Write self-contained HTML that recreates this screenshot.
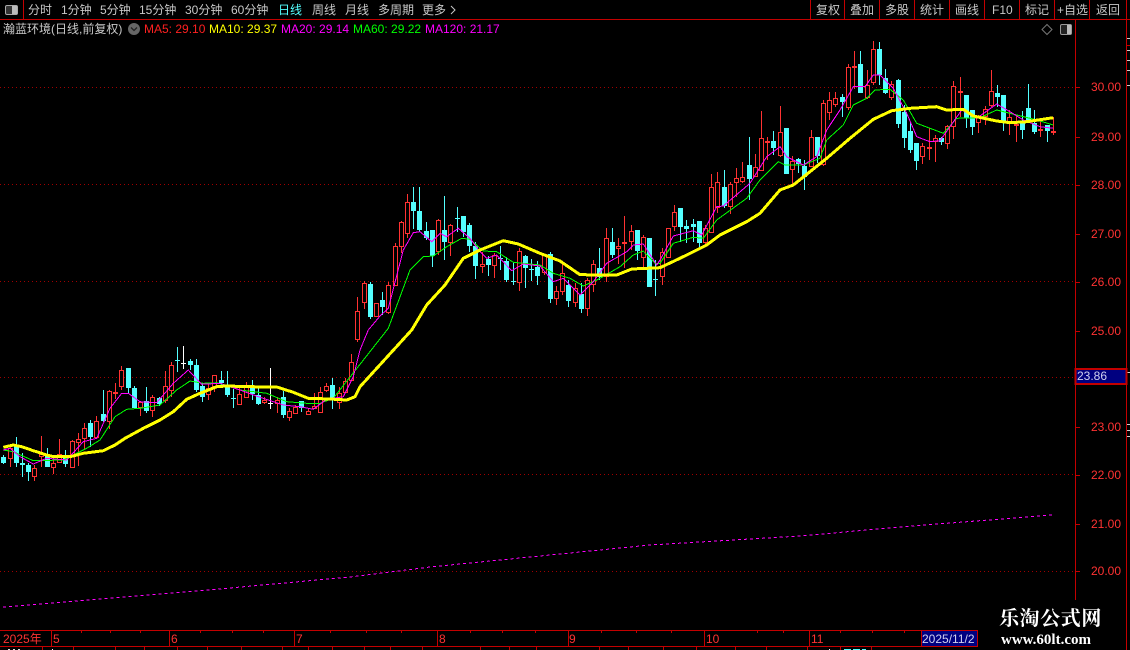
<!DOCTYPE html>
<html><head><meta charset="utf-8"><style>
html,body{margin:0;padding:0;background:#000;width:1130px;height:650px;overflow:hidden}
#p{position:relative;width:1130px;height:650px;background:#000;overflow:hidden;font:12px/14px "Liberation Sans","WenQuanYi Zen Hei","Noto Sans CJK SC",sans-serif;color:#c8c8c8}
#p span,#p div.t{position:absolute;white-space:nowrap}
.m span{top:3px}
.y span{left:1091px;color:#ff3232}
.b span{top:632px;color:#ff3232}
.c{width:5px;}
svg{position:absolute;left:0;top:0}
</style></head><body><div id="p">
<svg id="s" width="1130" height="650" viewBox="0 0 1130 650" shape-rendering="crispEdges"></svg>
<div class="m">
<span style="left:28px">分时</span><span style="left:61px">1分钟</span><span style="left:100px">5分钟</span><span style="left:139px">15分钟</span><span style="left:185px">30分钟</span><span style="left:231px">60分钟</span><span style="left:278px;color:#54ffff">日线</span><span style="left:312px">周线</span><span style="left:345px">月线</span><span style="left:378px">多周期</span><span style="left:422px">更多</span>
<span style="left:816px">复权</span><span style="left:850px">叠加</span><span style="left:885px">多股</span><span style="left:920px">统计</span><span style="left:955px">画线</span><span style="left:992px">F10</span><span style="left:1025px">标记</span><span style="left:1057px">+自选</span><span style="left:1096px">返回</span>
</div>
<span style="left:3px;top:22px">瀚蓝环境(日线,前复权)</span>
<span style="left:144px;top:22px;color:#ff2020">MA5: 29.10</span>
<span style="left:209px;top:22px;color:#ffff00">MA10: 29.37</span>
<span style="left:281px;top:22px;color:#ff00ff">MA20: 29.14</span>
<span style="left:353px;top:22px;color:#00ff00">MA60: 29.22</span>
<span style="left:425px;top:22px;color:#ff00ff">MA120: 21.17</span>
<div class="y">
<span style="top:80px">30.00</span><span style="top:130px">29.00</span><span style="top:178px">28.00</span><span style="top:227px">27.00</span><span style="top:275px">26.00</span><span style="top:324px">25.00</span><span style="top:420px">23.00</span><span style="top:468px">22.00</span><span style="top:517px">21.00</span><span style="top:564px">20.00</span>
</div>
<span style="left:1077px;top:369px;color:#d0d0f0">23.86</span>
<div class="b">
<span style="left:3px">2025年</span><span style="left:53px">5</span><span style="left:171px">6</span><span style="left:296px">7</span><span style="left:439px">8</span><span style="left:569px">9</span><span style="left:706px">10</span><span style="left:811px">11</span><span style="left:922px;color:#d0d0f0">2025/11/2</span>
</div>
<span style="left:999px;top:607px;font:bold 20px/24px 'Liberation Serif','Noto Serif CJK SC',serif;letter-spacing:.6px;color:#fff">乐淘公式网</span>
<span style="left:1001px;top:632px;font:bold 15px/16px 'Liberation Serif',serif;color:#fff">www.60lt.com</span>
</div>
<script>
var R=[
['c',350,370,345,372],['r',323,357,320,380],['c',318,368,292,380],['c',369,374,340,410],['c',375,395,370,422],['r',385,410,375,422],['r',343,350,288,380],['c',348,380,323,380],['r',368,383,350,403],['r',343,368,297,370],['c',350,373,330,380],['r',304,383,300,383],['r',298,310,280,378],['r',265,298,250,330],['c',250,290,240,322],['r',244,295,228,298],['c',222,243,150,245],['r',154,245,150,268],['r',155,158,128,178],['r',91,140,78,150],['c',84,144,84,160],['c',144,203,138,205],['r',186,204,182,228],['c',183,212,140,218],['r',172,212,165,230],['c',174,193,170,198],['r',139,184,93,188],['r',76,152,65,170],['c',60,64,22,95],['w',70,72,18,88],['c',63,75,57,90],['c',75,150,57,155],['c',137,170,130,186],['r',143,165,130,180],['r',106,140,106,155],['c',120,130,93,140],['c',137,165,94,170],['c',174,178,148,203],['r',162,194,135,195],['r',136,173,125,175],['c',145,163,120,180],['c',164,192,145,195],['r',180,190,170,192],['w',190,193,85,207],['r',180,193,170,220],['c',172,224,152,233],['r',213,233,205,243],['r',200,221,195,222],['c',183,205,183,215],['r',214,224,205,225],['r',197,208,160,208],['r',157,218,140,218],['r',139,152,130,155],['c',135,180,115,207],['r',160,190,140,207],['r',124,160,113,160],['r',67,124,42,124]
];
var S=[
['r',394,480,350,486],['r',310,370,304,388],['c',312,412,305,418],['r',370,410,368,410],['c',360,380,335,405],['r',315,400,305,402],['r',199,317,190,317],['r',127,200,124,220],['r',67,163,42,175],['c',66,92,22,148],['c',94,150,22,155],['c',153,173,125,180],['c',150,228,150,260],['r',120,217,118,225],['c',150,185,48,240],['r',136,188,133,228],['c',114,116,82,155],['c',108,155,108,172],['c',135,198,128,215],['c',198,258,185,296],['r',253,260,215,278],['c',237,255,228,288],['r',225,258,220,293],['c',234,238,198,270],['c',243,300,230,306],['c',303,307,247,315],['r',213,310,205,332],['c',228,265,225,323],['c',266,268,237,302],['c',262,288,243,315],['r',222,280,222,285],['c',222,357,216,368],['r',334,356,318,375],['r',280,335,250,345],['c',315,362,300,380],['r',323,368,310,380],['c',342,386,310,400],['r',300,386,293,408],['r',253,314,240,335],['c',264,290,205,300],['r',175,290,145,305],['c',186,225,145,235],['r',199,208,175,252],['r',187,190,108,265],['r',153,187,135,210],['c',150,213,150,240],['r',172,233,165,262],['c',174,320,174,320],['c',297,299,240,347],['r',215,290,204,315]
];
var T=[
['r',385,473,385,475],['r',337,380,315,392],['c',324,380,324,425],['c',378,387,360,430],['c',372,381,357,425],['c',363,430,363,440],['r',385,430,375,432],['r',262,400,222,400],['r',247,325,215,340],['c',262,318,210,325],['r',253,320,247,342],['r',235,250,205,290],['r',232,245,186,248],['c',195,237,112,300],['r',202,230,163,232],['r',115,212,32,212],['r',124,128,112,180],['c',124,144,94,165],['r',97,167,18,170],['c',84,222,84,222],['r',182,209,168,252],['c',177,193,175,218],['c',197,232,180,270]
];
var U=[
['r',320,412,300,412],['c',322,378,322,400],['r',220,405,210,408],['r',211,250,187,270],['r',203,224,187,230],['c',200,215,192,260],['r',112,235,102,240],['r',108,112,62,178],['c',102,188,62,190],['r',165,205,120,208],['r',58,160,32,165],['c',57,135,37,165],['c',145,190,118,192],['r',163,203,153,210],['c',150,282,148,295],['c',245,325,225,355],['c',303,360,275,368],['c',338,392,338,420],['r',347,380,340,402],['r',352,356,295,390],['r',325,335,315,395],['c',323,335,320,345],['r',288,342,285,358],['r',168,290,153,327],['r',183,186,140,260],['c',195,265,195,295],['c',240,290,240,315],['r',258,278,255,310],['r',238,260,228,285],['r',184,228,120,232],['c',190,200,165,232],['c',195,275,195,302],['r',260,275,240,315],['r',283,287,258,335],['c',273,300,243,327],['c',235,270,162,275],['c',280,305,240,312],['r',297,300,265,322],['c',284,302,284,335],['r',304,307,262,315]
];
var h='',RED='#ff3232',CY='#54ffff',LN='#c40000';
function L(x1,y1,x2,y2,c,e){return '<line x1="'+x1+'" y1="'+y1+'" x2="'+x2+'" y2="'+y2+'" stroke="'+c+'" '+(e||'')+'/>'}
// grid
[87,184,281,377,474,571].forEach(function(y){h+=L(0,y+.5,1075,y+.5,'#a00000','stroke-dasharray="1 3"')});
// frame
h+=L(0,19.5,1130,19.5,LN);
h+=L(1075.5,20,1075.5,600,LN);
h+=L(1126.5,0,1126.5,650,LN);
h+=L(23.5,0,23.5,19,LN);
[810,844,879,914,949,984,1019,1054,1089].forEach(function(x){h+=L(x+.5,0,x+.5,19,LN)});
h+=L(1126,45.5,1130,45.5,LN);
[[1127,38],[1127,50],[1127,60],[1127,70],[1127,85],[1127,372],[1127,424],[1127,430],[1127,436]].forEach(function(p){h+=L(p[0],p[1]+.5,1130,p[1]+.5,'#d0d0d0')});
[87,137,185,234,282,331,427,475,524,571].forEach(function(y){h+=L(1075,y+.5,1080,y+.5,LN)});
// time axis
h+=L(0,630.5,977,630.5,LN)+L(0,646.5,977,646.5,LN);
[51,169,294,437,568,704,809].forEach(function(x){h+=L(x+.5,630,x+.5,646,LN)});
[81,110,140,200,232,263,330,366,401,470,502,535,601,636,671,757,783,840,872,904].forEach(function(x){h+=L(x+.5,631,x+.5,633,LN)});
[42,73,115,144,177,207,241,282,308,332,364,390,422,480,509,536,599,628,663,696,735,766,807,840,871].forEach(function(x){h+=L(x+.5,647,x+.5,650,LN)});
h+='<rect x="921.5" y="630.5" width="56" height="16" fill="#000080" stroke="'+LN+'"/>';
h+='<rect x="1075.5" y="369" width="51" height="15" fill="#000080" stroke="'+LN+'" stroke-width="2"/>';
// bottom bits
h+=L(8,649.5,21,649.5,'#ddd','stroke-dasharray="2 3"')+L(844,649.5,866,649.5,CY,'stroke-dasharray="7 2"')+L(829.5,649,829.5,650,'#fff')+L(52.5,649,52.5,650,'#fff');
// candles
function add(list,y0,start){list.forEach(function(c,k){
 var i=start+k,x=Math.round(3.33+6.21*i),t=y0+c[1]/3,b=y0+c[2]/3,hi=y0+c[3]/3,lo=y0+c[4]/3;
 t=Math.round(t);b=Math.round(b);hi=Math.round(hi);lo=Math.round(lo);
 var col=c[0]=='r'?RED:c[0]=='c'?CY:'#fff';
 h+=L(x+.5,hi,x+.5,lo,col);
 if(c[0]=='r'){h+='<rect x="'+(x-1.5)+'" y="'+(t+.5)+'" width="4" height="'+Math.max(b-t-1,1)+'" fill="#000" stroke="'+col+'"/>'}
 else{h+='<rect x="'+(x-2)+'" y="'+t+'" width="5" height="'+Math.max(b-t,1)+'" fill="'+col+'"/>'}
})}
add(R,340,0);add(S,180,57);add(T,100,107);add(U,30,130);
// MA lines
function poly(groups){var p=[];groups.forEach(function(g){
 var ox=g[0],oy=g[1],a=g[2],mn=g[3],mx=g[4];
 a.forEach(function(q){var x=ox+q[0]/3,y=oy+q[1]/3;if(x>=mn&&x<mx)p.push([x,y])})});
 p.sort(function(a,b){return a[0]-b[0]});
 return p.map(function(q){return q[0].toFixed(1)+','+q[1].toFixed(1)}).join(' ')}
function pl(g,c,w){h+='<polyline points="'+poly(g)+'" fill="none" stroke="'+c+'" stroke-width="'+w+'"/>'}
var G=[[0,340,[[10,330],[40,335],[100,362],[190,360],[260,325],[300,300],[345,230],[380,208],[420,205],[480,195],[530,150],[570,123],[610,130],[650,128],[720,150],[800,160],[860,185],[920,190],[960,190],[1000,175],[1050,155],[1080,90]],0,350],
[340,180,[[145,445],[210,270],[250,230],[280,228],[320,200],[365,175],[390,178],[430,213],[470,215],[520,247],[600,255],[640,280],[690,295],[730,318],[775,298],[840,260],[880,225],[910,213],[945,250],[960,245]],350,660],
[660,100,[[0,490],[40,430],[100,412],[130,415],[170,360],[260,295],[300,240],[355,185],[375,195],[430,195],[480,175]],660,822],
[810,30,[[50,330],[100,285],[130,225],[170,205],[195,180],[240,178],[280,210],[320,280],[400,310],[440,265],[510,263],[560,240],[620,255],[680,270],[730,285]],822,1060]];
var M=[[0,340,[[10,330],[30,325],[60,350],[100,372],[140,355],[200,360],[250,305],[290,295],[330,205],[365,160],[385,160],[420,185],[470,188],[520,130],[565,90],[605,133],[660,130],[720,150],[780,172],[850,195],[900,200],[940,208],[980,178],[1030,170],[1060,110],[1080,30]],0,362],
[340,180,[[85,450],[120,408],[145,385],[190,210],[220,158],[240,155],[275,185],[300,160],[320,170],[355,145],[390,175],[420,215],[440,235],[470,225],[515,272],[550,252],[600,258],[640,305],[670,295],[700,325],[720,345],[760,305],[800,250],[860,215],[880,195],[910,192],[950,255],[960,245]],362,660],
[660,100,[[0,480],[40,408],[100,392],[125,405],[170,320],[190,318],[270,250],[320,170],[360,140],[380,170],[430,195],[470,170]],660,817],
[810,30,[[20,380],[50,300],[90,240],[130,170],[165,170],[190,135],[210,135],[250,175],[290,250],[320,320],[360,335],[390,332],[420,290],[455,240],[500,265],[560,222],[600,245],[640,270],[690,290],[730,295]],817,1060]];
var Y=[[0,340,[[10,322],[40,315],[65,320],[100,332],[140,345],[160,350],[210,350],[250,340],[310,332],[345,315],[375,295],[430,265],[480,240],[520,215],[560,178],[600,160],[650,140],[680,138],[750,140],[830,141],[880,157],[925,175],[990,177],[1040,180],[1065,170]],0,358],
[340,180,[[60,620],[215,450],[260,375],[315,315],[370,235],[420,210],[490,182],[535,192],[600,220],[660,243],[720,284],[830,285],[875,267],[960,264]],358,660],
[660,100,[[0,503],[60,475],[140,435],[180,405],[260,365],[300,340],[360,270],[400,255],[470,205]],660,815],
[810,30,[[0,435],[50,385],[120,325],[190,268],[245,242],[300,235],[380,230],[410,240],[460,238],[490,258],[560,273],[600,278],[650,275],[730,263]],815,1060]];
pl(G,'#00ff00',1);pl(M,'#ff00ff',1);pl(Y,'#ffff00',3);
h+='<polyline points="3,607 100,599 197,591 350,577 430,567 570,553 650,545 800,536 900,527 1052,515" fill="none" stroke="#ff00ff" stroke-dasharray="3 3"/>';
// icons
h+='<g shape-rendering="auto">';
h+='<rect x="5.5" y="5.5" width="12" height="9" rx="1.5" fill="#333" stroke="#aaa"/><rect x="12" y="6" width="5" height="8" fill="#bbb"/>';
h+='<rect x="1060.5" y="24.5" width="11" height="10" rx="1.5" fill="#222" stroke="#999"/><rect x="1067" y="25" width="4" height="9" fill="#bbb"/>';
h+='<path d="M1047 24.5L1052 29.5L1047 34.5L1042 29.5Z" fill="none" stroke="#777"/>';
h+='<circle cx="134" cy="29" r="6" fill="#666"/><path d="M131 27.5L134 30.5L137 27.5" fill="none" stroke="#222" stroke-width="1.3"/>';
h+='<path d="M451 6L455 10L451 14" fill="none" stroke="#c8c8c8"/>';
h+='</g>';
document.getElementById('s').innerHTML=h;
</script>
</body></html>
